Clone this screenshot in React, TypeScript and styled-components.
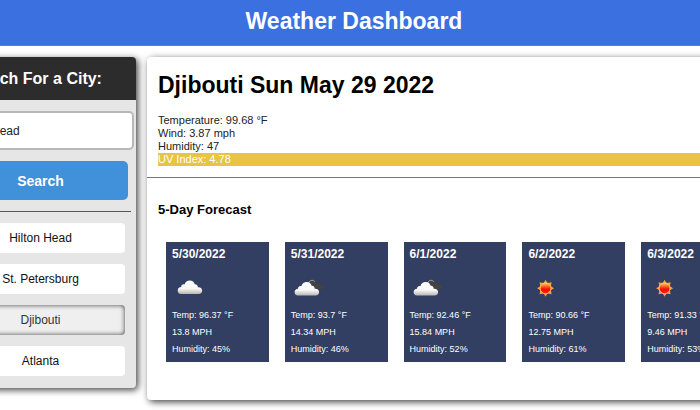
import React, { useState } from 'react';
import styled, { createGlobalStyle } from 'styled-components';

const GlobalStyle = createGlobalStyle`
  *, *::before, *::after { box-sizing: border-box; }
  body {
    margin: 0;
    background: #fff;
    color: #000;
    font-family: "Liberation Sans", Arial, sans-serif;
    font-size: 11px;
  }
  h1, h2, h3, p, ul, dl, dd { margin: 0; padding: 0; }
  button, input { font-family: inherit; }
`;

const Viewport = styled.div`
  min-height: 100vh;
  overflow: hidden;
`;

const Page = styled.div`
  width: calc(100% + 118px);
  margin-left: -55px;
`;

const Header = styled.header`
  padding: 8px 0 11px;
  background: #3b70e0;
  border-bottom: 1px solid #4f80ea;
  color: #fff;
  text-align: center;
`;

const SiteTitle = styled.h1`
  font-size: 23px;
  line-height: 26px;
`;

const Columns = styled.div`
  display: grid;
  grid-template-columns: 191px minmax(0, 1fr);
  gap: 11px;
  align-items: start;
  margin-top: 11px;
`;

const Sidebar = styled.aside`
  padding-bottom: 12px;
  background: #e6e6e6;
  border-radius: 4px;
  box-shadow: 2px 2px 7px rgba(0, 0, 0, 0.75);
`;

const SidebarTitle = styled.h2`
  padding: 12px 20px 11px;
  border-radius: 4px 4px 0 0;
  background: #2c2c2c;
  color: #fff;
  font-size: 16px;
  line-height: 20px;
  white-space: nowrap;
`;

const SearchForm = styled.form`
  display: grid;
  gap: 11px;
  padding: 11px 8px;
`;

const CityInput = styled.input`
  width: calc(100% + 6px);
  height: 39px;
  padding: 0 2px;
  border: 2px solid #b8b8b8;
  border-radius: 5px;
  background: #fff;
  color: #222;
  font-size: 12px;
`;

const SearchButton = styled.button`
  height: 39px;
  border: 0;
  border-radius: 5px;
  background: #4190da;
  color: #fff;
  font-size: 14px;
  font-weight: bold;
`;

const Divider = styled.hr<{ $inset?: boolean }>`
  height: 1px;
  margin: 0 ${(p) => (p.$inset ? '5px' : '0')};
  border: 0;
  background: ${(p) => (p.$inset ? '#555' : '#777')};
`;

const CityList = styled.ul`
  display: grid;
  gap: 11px;
  padding: 11px 11px 0;
  list-style: none;
`;

const CityButton = styled.button<{ $active: boolean }>`
  display: block;
  width: 100%;
  height: 30px;
  border: 0;
  border-radius: 4px;
  background: ${(p) => (p.$active ? '#efefef' : '#fff')};
  box-shadow: ${(p) => (p.$active ? 'inset 0 0 5px rgba(0, 0, 0, 0.75)' : 'none')};
  color: ${(p) => (p.$active ? '#333' : '#111')};
  font-size: 12px;
`;

const Main = styled.main`
  padding-bottom: 38px;
  border-radius: 4px;
  background: #fff;
  box-shadow: 2px 2px 7px rgba(0, 0, 0, 0.75);
`;

const Current = styled.section`
  padding: 15px 11px 11px;
`;

const CurrentTitle = styled.h2`
  margin-bottom: 16px;
  font-size: 23px;
  line-height: 26px;
`;

const Reading = styled.p<{ $uv?: boolean }>`
  line-height: 13px;
  color: ${(p) => (p.$uv ? '#fff' : '#222')};
  background: ${(p) => (p.$uv ? '#e9c344' : 'transparent')};
`;

const Forecast = styled.section`
  padding: 24px 19px 0 11px;
`;

const ForecastTitle = styled.h3`
  font-size: 13px;
  line-height: 16px;
`;

const Days = styled.div`
  display: grid;
  grid-template-columns: repeat(5, minmax(0, 1fr));
  gap: 16px;
  margin: 24px 0 0 8px;
`;

const DayCard = styled.article`
  padding: 5px 6px 4px;
  background: #323e62;
  color: #fff;
  font-size: 9px;
  line-height: 17px;
  white-space: nowrap;
`;

const DayDate = styled.h4`
  margin: 0 0 16px;
  font-size: 12px;
  line-height: 14px;
`;

const DayIcon = styled.svg`
  display: block;
  width: 36px;
  height: 20px;
  margin-bottom: 10px;
`;

type Sky = 'cloud' | 'broken' | 'sun';

const CLOUD =
  'M3.5 17.5C1 17.5 0 15.8 0 14C0 12 1.5 10.7 3.4 10.7C3.5 8.6 5 7.6 6.8 8C7.6 5.4 9.6 4 12 4C14.7 4 16.5 5.6 17 7.8C19 7.5 20.2 9 20.2 10.9C22.7 10.6 24.5 12 24.5 14.3C24.5 16.2 23.2 17.5 21 17.5Z';

const SUN_RAYS =
  'M8 0L9.8 3L13.7 2.3L13 6.2L16 8L13 9.8L13.7 13.7L9.8 13L8 16L6.2 13L2.3 13.7L3 9.8L0 8L3 6.2L2.3 2.3L6.2 3Z';

function SkyIcon({ sky, id }: { sky: Sky; id: string }) {
  if (sky === 'sun') {
    return (
      <DayIcon viewBox="0 0 36 20" role="img" aria-label="Clear sky">
        <defs>
          <linearGradient id={id} x1="0" y1="0" x2="0" y2="1">
            <stop offset="0" stopColor="#ffd65a" />
            <stop offset="0.35" stopColor="#ff5a24" />
            <stop offset="0.6" stopColor="#ff0800" />
            <stop offset="1" stopColor="#ff2410" />
          </linearGradient>
        </defs>
        <g transform="translate(9.1 2.8) scale(1.06)">
          <path d={SUN_RAYS} fill="#f0a238" />
          <circle cx="8" cy="8" r="5.1" fill={`url(#${id})`} stroke="#ffc55c" strokeWidth="0.8" />
        </g>
      </DayIcon>
    );
  }
  const broken = sky === 'broken';
  return (
    <DayIcon viewBox="0 0 36 20" role="img" aria-label={broken ? 'Broken clouds' : 'Cloudy'}>
      <defs>
        <linearGradient id={id} x1="0" y1="0" x2="0" y2="1">
          <stop offset="0" stopColor="#fff" />
          <stop offset="0.6" stopColor="#f8f8f8" />
          <stop offset="1" stopColor="#b9b7b3" />
        </linearGradient>
      </defs>
      {broken && (
        <>
          <path
            d="M18 11.5C16.5 6.5 18 3.2 21 3.2C23.2 3.2 24.3 4.4 24.8 6C27 4.8 28.7 6 29 7.8C31.5 7.3 33 8.6 33 10.3C33 11.8 31.8 12.6 30 12.6H20Z"
            fill="#424242"
          />
          <path d="M17.8 6.3C18.3 4.1 19.4 3.3 21 3.3C22.5 3.3 23.5 4 24 5" fill="none" stroke="#999" />
        </>
      )}
      <path d={CLOUD} fill={`url(#${id})`} transform={broken ? 'translate(3.6 1)' : 'translate(5.7 -0.6)'} />
    </DayIcon>
  );
}

const CITIES = ['Hilton Head', 'St. Petersburg', 'Djibouti', 'Atlanta'];

const DAYS: { date: string; sky: Sky; temp: string; wind: string; humidity: string }[] = [
  { date: '5/30/2022', sky: 'cloud', temp: '96.37', wind: '13.8', humidity: '45' },
  { date: '5/31/2022', sky: 'broken', temp: '93.7', wind: '14.34', humidity: '46' },
  { date: '6/1/2022', sky: 'broken', temp: '92.46', wind: '15.84', humidity: '52' },
  { date: '6/2/2022', sky: 'sun', temp: '90.66', wind: '12.75', humidity: '61' },
  { date: '6/3/2022', sky: 'sun', temp: '91.33', wind: '9.46', humidity: '53' },
];

export default function App() {
  const [query, setQuery] = useState('Hilton Head');
  const [active, setActive] = useState('Djibouti');

  return (
    <Viewport>
      <GlobalStyle />
      <Page>
        <Header>
          <SiteTitle>Weather Dashboard</SiteTitle>
        </Header>
        <Columns>
          <Sidebar>
            <SidebarTitle>
              <label htmlFor="city">Search For a City:</label>
            </SidebarTitle>
            <SearchForm onSubmit={(e) => e.preventDefault()}>
              <CityInput id="city" type="text" value={query} onChange={(e) => setQuery(e.target.value)} />
              <SearchButton type="submit">Search</SearchButton>
            </SearchForm>
            <Divider $inset />
            <CityList>
              {CITIES.map((city) => (
                <li key={city}>
                  <CityButton type="button" $active={city === active} onClick={() => setActive(city)}>
                    {city}
                  </CityButton>
                </li>
              ))}
            </CityList>
          </Sidebar>
          <Main>
            <Current>
              <CurrentTitle>Djibouti Sun May 29 2022</CurrentTitle>
              <Reading>Temperature: 99.68 °F</Reading>
              <Reading>Wind: 3.87 mph</Reading>
              <Reading>Humidity: 47</Reading>
              <Reading $uv>UV Index: 4.78</Reading>
            </Current>
            <Divider />
            <Forecast>
              <ForecastTitle>5-Day Forecast</ForecastTitle>
              <Days>
                {DAYS.map((day, i) => (
                  <DayCard key={day.date}>
                    <DayDate>{day.date}</DayDate>
                    <SkyIcon sky={day.sky} id={`sky-${i}`} />
                    <p>Temp: {day.temp} °F</p>
                    <p>{day.wind} MPH</p>
                    <p>Humidity: {day.humidity}%</p>
                  </DayCard>
                ))}
              </Days>
            </Forecast>
          </Main>
        </Columns>
      </Page>
    </Viewport>
  );
}
